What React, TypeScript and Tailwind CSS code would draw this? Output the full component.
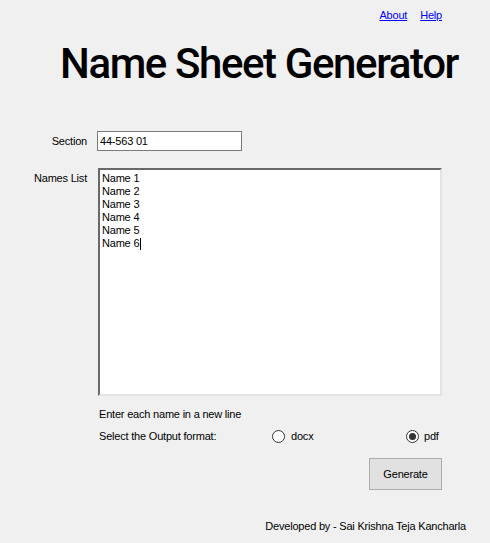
import React from "react";

export default function App() {
  const names = ["Name 1", "Name 2", "Name 3", "Name 4", "Name 5", "Name 6"];
  return (
    <div
      className="w-[490px] h-[543px] bg-[#f0f0f0] text-black flex flex-col overflow-hidden text-[11px] tracking-[-0.2px]"
      style={{ fontFamily: '"Liberation Sans", Arial, sans-serif' }}
    >
      <div className="flex justify-end pr-[48px] pt-[8px] gap-[13px] text-[11px] leading-[14px]">
        <a className="text-[#0000ff] underline">About</a>
        <a className="text-[#0000ff] underline">Help</a>
      </div>
      <div
        className="pl-[60px] mt-[17px] text-[42px] leading-[50px] font-medium tracking-[-1.4px] whitespace-nowrap"
        style={{ fontFamily: 'Roboto, "Noto Sans", sans-serif' }}
      >
        Name Sheet Generator
      </div>
      <div className="flex items-center mt-[42px]">
        <div className="w-[87px] text-right">Section</div>
        <div className="ml-[10px] w-[145px] h-[20px] bg-white border border-[#7a7a7a] flex items-center pl-[2px]">
          44-563 01
        </div>
      </div>
      <div className="flex items-start mt-[17px]">
        <div className="w-[87px] text-right mt-[2px]">Names List</div>
        <div className="ml-[11px] w-[344px] h-[228px] bg-white border-t-2 border-l-2 border-t-[#696969] border-l-[#696969] border-r-2 border-b-2 border-r-[#e3e3e3] border-b-[#e3e3e3] pl-[2px] pt-[2px] leading-[13px]">
          {names.map((n, i) => (
            <div key={i}>
              {n}
              {i === names.length - 1 && <span className="inline-block w-px h-[12px] bg-black align-middle ml-px" />}
            </div>
          ))}
        </div>
      </div>
      <div className="pl-[99px] mt-[11px] leading-[14px]">Enter each name in a new line</div>
      <div className="flex items-center pl-[99px] mt-[8px] leading-[14px]">
        <div className="w-[173px]">Select the Output format:</div>
        <div className="flex items-center gap-[6px] w-[134px]">
          <span className="w-[13px] h-[13px] rounded-full border border-[#333] bg-white" />
          <span>docx</span>
        </div>
        <div className="flex items-center gap-[5px]">
          <span className="w-[13px] h-[13px] rounded-full border border-[#333] bg-white flex items-center justify-center">
            <span className="w-[7px] h-[7px] rounded-full bg-[#333]" />
          </span>
          <span>pdf</span>
        </div>
      </div>
      <div className="flex justify-end pr-[48px] mt-[15px]">
        <div className="w-[73px] h-[32px] bg-[#e1e1e1] border border-[#adadad] flex items-center justify-center">
          Generate
        </div>
      </div>
      <div className="flex justify-end pr-[24px] mt-[29px] leading-[14px]">
        Developed by - Sai Krishna Teja Kancharla
      </div>
    </div>
  );
}
